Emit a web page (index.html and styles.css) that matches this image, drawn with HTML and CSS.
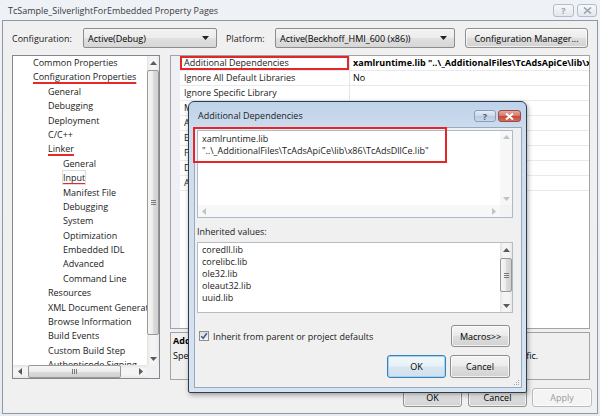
FILE: index.html
```html
<!DOCTYPE html>
<html lang="en">
<head>
<meta charset="utf-8">
<title>TcSample_SilverlightForEmbedded Property Pages</title>
<link rel="stylesheet" href="styles.css">
</head>
<body>
<div class="window">
  <div class="titlebar">
    <span class="title">TcSample_SilverlightForEmbedded Property Pages</span>
    <div class="caption">
      <span class="cbtn cbtn-help">?</span>
      <span class="cbtn cbtn-close"><svg width="9" height="7" viewBox="0 0 9 7"><path d="M1 0.5 L8 6.5 M8 0.5 L1 6.5" stroke="#98a3b1" stroke-width="1.6" fill="none"/></svg></span>
    </div>
  </div>
  <div class="client">
    <div class="config-row">
      <span class="lbl lbl-config">Configuration:</span>
      <div class="combo combo-config"><span class="combo-text">Active(Debug)</span><svg class="combo-arrow" width="7" height="4" viewBox="0 0 7 4"><path d="M0 0H7L3.5 4Z"/></svg></div>
      <span class="lbl lbl-platform">Platform:</span>
      <div class="combo combo-platform"><span class="combo-text">Active(Beckhoff_HMI_600 (x86))</span><svg class="combo-arrow" width="7" height="4" viewBox="0 0 7 4"><path d="M0 0H7L3.5 4Z"/></svg></div>
      <button class="btn btn-cfgmgr">Configuration Manager...</button>
    </div>

    <div class="main">
      <div class="tree">
        <div class="tree-list">
          <div class="ti l1">Common Properties</div>
          <div class="ti l1"><span class="mark">Configuration Properties</span></div>
          <div class="ti l2">General</div>
          <div class="ti l2">Debugging</div>
          <div class="ti l2">Deployment</div>
          <div class="ti l2">C/C++</div>
          <div class="ti l2"><span class="mark">Linker</span></div>
          <div class="ti l3">General</div>
          <div class="ti l3"><span class="mark sel">Input</span></div>
          <div class="ti l3">Manifest File</div>
          <div class="ti l3">Debugging</div>
          <div class="ti l3">System</div>
          <div class="ti l3">Optimization</div>
          <div class="ti l3">Embedded IDL</div>
          <div class="ti l3">Advanced</div>
          <div class="ti l3">Command Line</div>
          <div class="ti l2">Resources</div>
          <div class="ti l2">XML Document Generator</div>
          <div class="ti l2">Browse Information</div>
          <div class="ti l2">Build Events</div>
          <div class="ti l2">Custom Build Step</div>
          <div class="ti l2">Authenticode Signing</div>
          <div class="ti l2">Deployment</div>
        </div>
        <div class="sb-v">
          <div class="sb-arrow"><svg width="7" height="4" viewBox="0 0 7 4"><path d="M0 4L3.5 0L7 4Z" fill="#5a5a5a"/></svg></div>
          <div class="thumb-v tree-thumb"><svg width="5" height="5" viewBox="0 0 5 5"><path d="M0 0.5H5M0 2.5H5M0 4.5H5" stroke="#7a7a7a" stroke-width="1"/></svg></div>
          <div class="sb-fill"></div>
          <div class="sb-arrow"><svg width="7" height="4" viewBox="0 0 7 4"><path d="M0 0H7L3.5 4Z" fill="#5a5a5a"/></svg></div>
        </div>
        <div class="sb-h">
          <div class="sb-arrow"><svg width="4" height="7" viewBox="0 0 4 7"><path d="M4 0V7L0 3.5Z" fill="#5a5a5a"/></svg></div>
          <div class="thumb-h tree-hthumb"><svg width="5" height="5" viewBox="0 0 5 5"><path d="M0.5 0V5M2.5 0V5M4.5 0V5" stroke="#7a7a7a" stroke-width="1"/></svg></div>
          <div class="sb-fill"></div>
          <div class="sb-arrow"><svg width="4" height="7" viewBox="0 0 4 7"><path d="M0 0V7L4 3.5Z" fill="#5a5a5a"/></svg></div>
        </div>
        <div class="sb-corner"></div>
      </div>

      <div class="right">
        <div class="pgrid">
          <div class="prow"><div class="gut"></div><div class="pname hl">Additional Dependencies</div><div class="pval bold">xamlruntime.lib "..\_AdditionalFiles\TcAdsApiCe\lib\x86\TcAdsDllCe.lib"</div></div>
          <div class="prow"><div class="gut"></div><div class="pname">Ignore All Default Libraries</div><div class="pval">No</div></div>
          <div class="prow"><div class="gut"></div><div class="pname">Ignore Specific Library</div><div class="pval"></div></div>
          <div class="prow"><div class="gut"></div><div class="pname">Module Definition File</div><div class="pval"></div></div>
          <div class="prow"><div class="gut"></div><div class="pname">Add Module to Assembly</div><div class="pval"></div></div>
          <div class="prow"><div class="gut"></div><div class="pname">Embed Managed Resource File</div><div class="pval"></div></div>
          <div class="prow"><div class="gut"></div><div class="pname">Force Symbol References</div><div class="pval"></div></div>
          <div class="prow"><div class="gut"></div><div class="pname">Delay Loaded DLLs</div><div class="pval"></div></div>
          <div class="prow"><div class="gut"></div><div class="pname">Assembly Link Resource</div><div class="pval"></div></div>
        </div>
        <div class="desc">
          <div class="desc-title">Additional Dependencies</div>
          <div class="desc-text">Specifies additional items to add to the link line (ex: kernel32.lib); configuration specific.</div>
        </div>
      </div>
    </div>

    <div class="bottom-row">
      <button class="btn btn-ok">OK</button>
      <button class="btn btn-cancel">Cancel</button>
      <button class="btn btn-apply" disabled>Apply</button>
    </div>
  </div>

  <div class="dialog">
    <div class="dlg-title">
      <span class="dlg-title-text">Additional Dependencies</span>
      <div class="dlg-caption">
        <span class="dbtn dbtn-help">?</span>
        <span class="dbtn dbtn-close"><svg width="9" height="7" viewBox="0 0 9 7"><path d="M1 0.5 L8 6.5 M8 0.5 L1 6.5" stroke="#fff" stroke-width="2" fill="none"/></svg></span>
      </div>
    </div>
    <div class="dlg-client">
      <div class="textbox">
        <div class="tb-content">
          <div>xamlruntime.lib</div>
          <div>"..\_AdditionalFiles\TcAdsApiCe\lib\x86\TcAdsDllCe.lib"</div>
        </div>
        <div class="sb-v sb-pale">
          <div class="sb-arrow"><svg width="7" height="4" viewBox="0 0 7 4"><path d="M0 4L3.5 0L7 4Z" fill="#bcc3cc"/></svg></div>
          <div class="sb-fill"></div>
          <div class="sb-arrow"><svg width="7" height="4" viewBox="0 0 7 4"><path d="M0 0H7L3.5 4Z" fill="#bcc3cc"/></svg></div>
        </div>
        <div class="sb-h sb-pale">
          <div class="sb-arrow"><svg width="4" height="7" viewBox="0 0 4 7"><path d="M4 0V7L0 3.5Z" fill="#bcc3cc"/></svg></div>
          <div class="sb-fill"></div>
          <div class="sb-arrow"><svg width="4" height="7" viewBox="0 0 4 7"><path d="M0 0V7L4 3.5Z" fill="#bcc3cc"/></svg></div>
        </div>
        <div class="sb-corner pale-corner"></div>
      </div>

      <div class="inh-label">Inherited values:</div>
      <div class="listbox">
        <div class="lb-content">
          <div>coredll.lib</div>
          <div>corelibc.lib</div>
          <div>ole32.lib</div>
          <div>oleaut32.lib</div>
          <div>uuid.lib</div>
        </div>
        <div class="sb-v">
          <div class="sb-arrow"><svg width="7" height="4" viewBox="0 0 7 4"><path d="M0 4L3.5 0L7 4Z" fill="#5a5a5a"/></svg></div>
          <div class="thumb-v lb-thumb"><svg width="5" height="5" viewBox="0 0 5 5"><path d="M0 0.5H5M0 2.5H5M0 4.5H5" stroke="#7a7a7a" stroke-width="1"/></svg></div>
          <div class="sb-fill"></div>
          <div class="sb-arrow"><svg width="7" height="4" viewBox="0 0 7 4"><path d="M0 0H7L3.5 4Z" fill="#5a5a5a"/></svg></div>
        </div>
      </div>

      <div class="check-row">
        <span class="checkbox"><svg width="8" height="8" viewBox="0 0 8 8"><path d="M1.2 4.2L3.2 6.3L6.8 1.2" stroke="#3a5a9a" stroke-width="1.5" fill="none"/></svg></span>
        <span class="check-label">Inherit from parent or project defaults</span>
        <button class="btn btn-macros">Macros&gt;&gt;</button>
      </div>

      <div class="dlg-buttons">
        <button class="btn btn-dok">OK</button>
        <button class="btn btn-dcancel">Cancel</button>
      </div>
      <div class="grip"><svg width="7" height="7" viewBox="0 0 7 7"><path d="M6 1h1v1h-1zM4 3h1v1h-1zM6 3h1v1h-1zM2 5h1v1h-1zM4 5h1v1h-1zM6 5h1v1h-1z" fill="#a0a8b3"/></svg></div>
    </div>
    <div class="annot"></div>
  </div>
</div>
</body>
</html>
```

FILE: styles.css
```css
* { box-sizing: border-box; }
html, body { margin: 0; padding: 0; }
body {
  width: 600px;
  height: 416px;
  overflow: hidden;
  font-family: "Open Sans", "Noto Sans", sans-serif;
  font-size: 9px;
  color: #000;
  background: #fff;
}

.window {
  position: relative;
  width: 600px;
  height: 416px;
  background: linear-gradient(#eef1f5, #e8ecf1);
  padding: 0 2px 2px 2px;
  display: flex;
  flex-direction: column;
}

.titlebar {
  height: 20px;
  display: flex;
  align-items: center;
  padding-left: 6px;
}
.title { color: #3c3c3c; }
.caption {
  margin-left: auto;
  margin-right: 1px;
  align-self: flex-start;
  margin-top: 4px;
  display: flex;
  gap: 3px;
}
.cbtn {
  width: 21px;
  height: 13px;
  border: 1px solid #b3bdc9;
  border-radius: 3px;
  background: linear-gradient(#f7f8fa, #e4e8ee);
  display: flex;
  align-items: center;
  justify-content: center;
  color: #98a3b1;
  font-weight: bold;
  font-size: 9px;
  line-height: 1;
}
.cbtn-close { width: 20px; }

.client {
  flex: 1;
  border: 1px solid #8e98a5;
  background: #f0f0f0;
  padding: 7px 4px 0 9px;
  display: flex;
  flex-direction: column;
}

.config-row {
  height: 20px;
  display: flex;
  align-items: center;
}
.lbl { color: #1a1a1a; }
.lbl-config { width: 71px; }
.lbl-platform { width: 49px; margin-left: 9px; }

.combo {
  height: 20px;
  border: 1px solid #8d8d8d;
  border-radius: 2px;
  background: linear-gradient(#f3f3f3, #ececec 48%, #e0e0e0 52%, #d6d6d6);
  display: flex;
  align-items: center;
  padding: 0 7px 0 4px;
}
.combo-text { flex: 1; white-space: nowrap; overflow: hidden; }
.combo-arrow { fill: #222; flex: none; }
.combo-config { width: 134px; }
.combo-platform { width: 180px; }

.btn {
  font: inherit;
  color: #000;
  border: 1px solid #8f8f8f;
  border-radius: 3px;
  background: linear-gradient(#f5f5f5, #ececec 46%, #dedede 52%, #d2d2d2);
  display: flex;
  align-items: center;
  justify-content: center;
  padding: 0;
  margin: 0;
  box-shadow: inset 0 0 0 1px rgba(255,255,255,0.7);
}
.btn-cfgmgr { width: 123px; height: 20px; margin-left: 10px; }

.main {
  margin-top: 7px;
  height: 325px;
  display: flex;
  gap: 10px;
}

.tree {
  width: 148px;
  height: 324px;
  border: 1px solid #828790;
  background: #fff;
  display: grid;
  grid-template-columns: 1fr 12px;
  grid-template-rows: 1fr 13px;
  overflow: hidden;
}
.tree-list { overflow: hidden; min-width: 0; }
.ti {
  height: 14.4px;
  line-height: 14.4px;
  white-space: nowrap;
  color: #1a1a1a;
}
.l1 { padding-left: 20px; }
.l2 { padding-left: 35px; }
.l3 { padding-left: 50px; }
.mark {
  text-decoration: underline;
  text-decoration-color: #e52a2a;
  text-decoration-thickness: 2px;
  text-underline-offset: 2px;
  text-decoration-skip-ink: none;
}
.sel { outline: 1px solid #dcdcdc; outline-offset: 0; }

.sb-v {
  display: flex;
  flex-direction: column;
  background: linear-gradient(to right, #e3e3e3, #f4f4f4 25%, #f4f4f4 75%, #e8e8e8);
}
.sb-h {
  display: flex;
  background: linear-gradient(#e3e3e3, #f4f4f4 25%, #f4f4f4 75%, #e8e8e8);
}
.sb-arrow {
  flex: none;
  height: 13px;
  display: flex;
  align-items: center;
  justify-content: center;
}
.sb-h .sb-arrow { width: 13px; height: auto; }
.sb-fill { flex: 1; }
.sb-corner { background: #f0f0f0; }

.thumb-v {
  flex: none;
  margin: 1px 0 0 0;
  border: 1px solid #979797;
  border-radius: 2px;
  background: linear-gradient(to right, #f6f6f6, #ececec 50%, #dcdcdc 52%, #d0d0d0);
  display: flex;
  align-items: center;
  justify-content: center;
}
.thumb-h {
  flex: none;
  margin-left: 2px;
  border: 1px solid #979797;
  border-radius: 2px;
  background: linear-gradient(#f6f6f6, #ececec 50%, #dcdcdc 52%, #d0d0d0);
  display: flex;
  align-items: center;
  justify-content: center;
}
.tree-thumb { height: 265px; }
.tree-hthumb { width: 93px; }

.right {
  width: 420px;
  display: flex;
  flex-direction: column;
  gap: 3px;
}
.pgrid {
  height: 274px;
  border: 1px solid #a3a3a3;
  background: linear-gradient(to right, #eef0f5 0, #eef0f5 9px, #fff 9px);
  overflow: hidden;
}
.prow {
  height: 15px;
  display: grid;
  grid-template-columns: 9px 170px 1fr;
}
.pname, .pval {
  line-height: 14px;
  border-bottom: 1px solid #e8eaf0;
  white-space: nowrap;
  overflow: hidden;
  background: #fff;
}
.pname { padding-left: 4px; border-right: 1px solid #e3e5ea; color: #1a1a1a; }
.pval { padding-left: 3px; }
.bold { font-weight: bold; }
.hl { box-shadow: inset 0 0 0 2px #e3262a; }

.desc {
  height: 48px;
  border: 1px solid #a3a3a3;
  background: #f0f0f0;
  padding: 1px 2px;
  overflow: hidden;
}
.desc-title { font-weight: bold; line-height: 14.5px; }
.desc-text { line-height: 14.5px; white-space: nowrap; }

.bottom-row {
  margin-top: 8px;
  height: 19px;
  display: flex;
  justify-content: flex-end;
  padding-right: 1px;
}
.bottom-row .btn { height: 19px; }
.btn-ok { width: 59px; }
.btn-cancel { width: 59px; margin-left: 6px; }
.btn-apply { width: 60px; margin-left: 5px; }
.btn-apply:disabled {
  color: #9a9a9a;
  border-color: #b8bcc0;
  background: #f4f4f4;
}

/* Dialog */
.dialog {
  position: absolute;
  left: 188px;
  top: 101px;
  width: 339px;
  height: 292px;
  border: 1px solid #2f3c4c;
  border-radius: 6px 6px 2px 2px;
  background: linear-gradient(#bed2ea, #cddcee 26px, #d6e3f1);
  padding: 0 4px 4px 5px;
  display: flex;
  flex-direction: column;
  box-shadow: 1px 2px 5px rgba(0,0,0,0.35);
}
.dlg-title {
  height: 25px;
  flex: none;
  display: flex;
  align-items: flex-start;
}
.dlg-title-text {
  margin-top: 7px;
  padding-left: 4px;
  color: #1c1c1c;
}
.dlg-caption {
  margin-left: auto;
  margin-top: 8px;
  margin-right: 1px;
  display: flex;
  gap: 2px;
}
.dbtn {
  width: 22px;
  height: 12px;
  border: 1px solid #8d9db3;
  border-radius: 3px;
  display: flex;
  align-items: center;
  justify-content: center;
  font-size: 9px;
  line-height: 1;
  font-weight: bold;
}
.dbtn-help {
  background: linear-gradient(#e4edf7, #cbd9ea 50%, #b9cbe2 52%, #c9d9ec);
  color: #4e5d71;
}
.dbtn-close {
  width: 23px;
  border-color: #9b4c47;
  background: linear-gradient(#e6a79d, #d57a6e 48%, #c4473b 52%, #d46d5d);
}

.dlg-client {
  flex: 1;
  border: 1px solid #98a8bd;
  background: #f0f0f0;
  padding: 2px 8px 0 2px;
  display: flex;
  flex-direction: column;
  position: relative;
}

.textbox {
  height: 88px;
  flex: none;
  border: 1px solid #abb9c9;
  background: #fff;
  display: grid;
  grid-template-columns: 1fr 12px;
  grid-template-rows: 1fr 12px;
}
.tb-content {
  padding: 2px 0 0 4px;
  line-height: 12px;
  white-space: nowrap;
  overflow: hidden;
  color: #1a1a1a;
}
.sb-pale { background: #f7f7f7; }
.pale-corner { background: #f3f3f3; }
.textbox .sb-arrow { height: 12px; }
.textbox .sb-h .sb-arrow { height: auto; width: 12px; }

.inh-label {
  margin-top: 7px;
  line-height: 14px;
  color: #1a1a1a;
}
.listbox {
  margin-top: 3px;
  height: 71px;
  flex: none;
  border: 1px solid #b4bcc6;
  background: #fff;
  display: grid;
  grid-template-columns: 1fr 12px;
}
.lb-content {
  padding: 1px 0 0 4px;
  line-height: 12px;
  color: #1a1a1a;
}
.lb-thumb { height: 34px; margin-top: 2px; }

.check-row {
  margin-top: 12px;
  height: 22px;
  display: flex;
  align-items: center;
  padding-left: 2px;
  padding-right: 3px;
}
.checkbox {
  width: 10px;
  height: 10px;
  border: 1px solid #8e8f8f;
  background: linear-gradient(#dcdcdc, #f6f6f6);
  display: flex;
  align-items: center;
  justify-content: center;
}
.check-label { margin-left: 4px; color: #1a1a1a; }
.btn-macros { margin-left: auto; width: 59px; height: 22px; }

.dlg-buttons {
  margin-top: 8px;
  height: 23px;
  display: flex;
  justify-content: flex-end;
  gap: 4px;
  padding-right: 3px;
}
.btn-dok {
  width: 59px;
  height: 23px;
  border-color: #3c7fb1;
  box-shadow: inset 0 0 0 1px #9fd6f3;
  background: linear-gradient(#f2f7fb, #e8f1f8 48%, #d8e6f1 52%, #d0e0ed);
}
.btn-dcancel { width: 60px; height: 23px; }

.grip {
  margin-top: auto;
  align-self: flex-end;
  margin-right: -6px;
  margin-bottom: 1px;
  height: 7px;
  display: flex;
}

.annot {
  position: absolute;
  left: 4px;
  top: 25px;
  width: 254px;
  height: 36px;
  border: 2px solid #e3262a;
}
```
